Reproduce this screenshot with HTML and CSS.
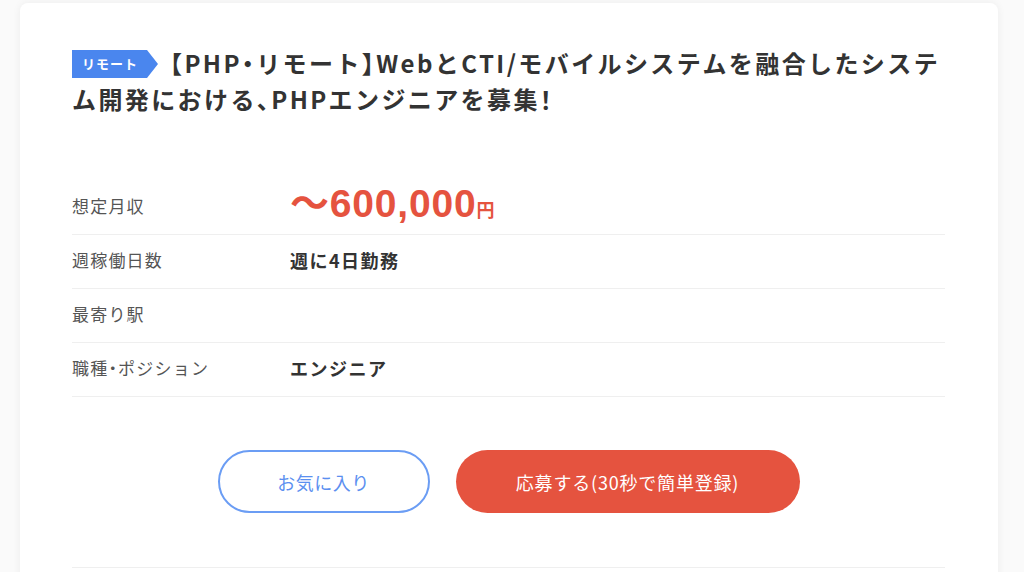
FILE: index.html
```html
<!DOCTYPE html>
<html lang="ja">
<head>
    <meta charset="UTF-8">
    <meta name="viewport" content="width=device-width, initial-scale=1.0">
    <title>求人詳細</title>
    <link rel="stylesheet" href="styles.css">
</head>
<body>
    <div class="card">
        <h1 class="title"><span class="tag">リモート</span><span class="p">【</span>PHP<span class="p">・</span>リモート<span class="p">】</span>WebとCTI/モバイルシステムを融合したシステム開発における<span class="p">、</span>PHPエンジニアを募集<span class="p">！</span></h1>

        <dl class="info">
            <div class="row">
                <dt>想定月収</dt>
                <dd class="salary">〜600,000<span class="yen">円</span></dd>
            </div>
            <div class="row">
                <dt>週稼働日数</dt>
                <dd>週に4日勤務</dd>
            </div>
            <div class="row">
                <dt>最寄り駅</dt>
                <dd></dd>
            </div>
            <div class="row">
                <dt>職種<span class="p">・</span>ポジション</dt>
                <dd>エンジニア</dd>
            </div>
        </dl>

        <div class="actions">
            <a class="btn btn-fav" href="#">お気に入り</a>
            <a class="btn btn-apply" href="#">応募する(30秒で簡単登録)</a>
        </div>

        <div class="bottom-line"></div>
    </div>
</body>
</html>
```

FILE: styles.css
```css
*{
    margin: 0;
    padding: 0;
    box-sizing: border-box;
}
body{
    background: #fafafa;
    font-family: "Noto Sans CJK JP", "Noto Sans", sans-serif;
    color: #333;
    padding: 3px 26px 0 20px;
    overflow: hidden;
}
.card{
    background: #fff;
    border-radius: 8px;
    box-shadow: 0 0 8px rgba(0,0,0,0.06);
    padding: 42px 53px 0 52px;
    height: 600px;
}
/* 約物だけ詰める */
.p{
    font-feature-settings: "halt";
}
.title{
    font-size: 24px;
    font-weight: 700;
    line-height: 36px;
    color: #333;
    letter-spacing: 2.4px;
}
.tag{
    display: inline-block;
    position: relative;
    vertical-align: 4px;
    background: #4a86ee;
    color: #fff;
    font-size: 13px;
    line-height: 28px;
    height: 28px;
    padding: 0 9px 0 10px;
    margin-right: 23px;
    letter-spacing: 1px;
}
.tag::after{
    content: "";
    position: absolute;
    right: -11px;
    top: 0;
    border-left: 11px solid #4a86ee;
    border-top: 14px solid transparent;
    border-bottom: 14px solid transparent;
}
.info{
    margin-top: 63px;
}
.row{
    display: flex;
    align-items: center;
    height: 54px;
    padding-bottom: 4px;
    border-bottom: 1px solid #efefef;
}
.row:first-child{
    height: 55px;
}
.row dt{
    width: 218px;
    font-size: 17px;
    color: #555;
    letter-spacing: 1.2px;
}
.row dd{
    font-size: 18px;
    font-weight: 700;
    color: #333;
    letter-spacing: 1.5px;
}
.row dd.salary{
    font-size: 39px;
    color: #e5533f;
    line-height: 1;
    margin-top: -4px;
    letter-spacing: 0.8px;
    font-family: "Liberation Sans", "Noto Sans CJK JP", sans-serif;
}
.yen{
    font-size: 18px;
    letter-spacing: 0;
    font-family: "Noto Sans CJK JP", sans-serif;
}
.actions{
    display: flex;
    justify-content: center;
    gap: 26px;
    margin-top: 53px;
}
.btn{
    display: flex;
    align-items: center;
    justify-content: center;
    height: 63px;
    border-radius: 32px;
    font-size: 18px;
    letter-spacing: 0.5px;
    text-decoration: none;
}
.btn-fav{
    width: 212px;
    border: 2px solid #6b9df4;
    color: #5b8ff0;
}
.btn-apply{
    width: 344px;
    background: #e5533f;
    color: #fff;
    letter-spacing: 0.8px;
}
.bottom-line{
    margin-top: 54px;
    border-top: 1px solid #efefef;
}
```
